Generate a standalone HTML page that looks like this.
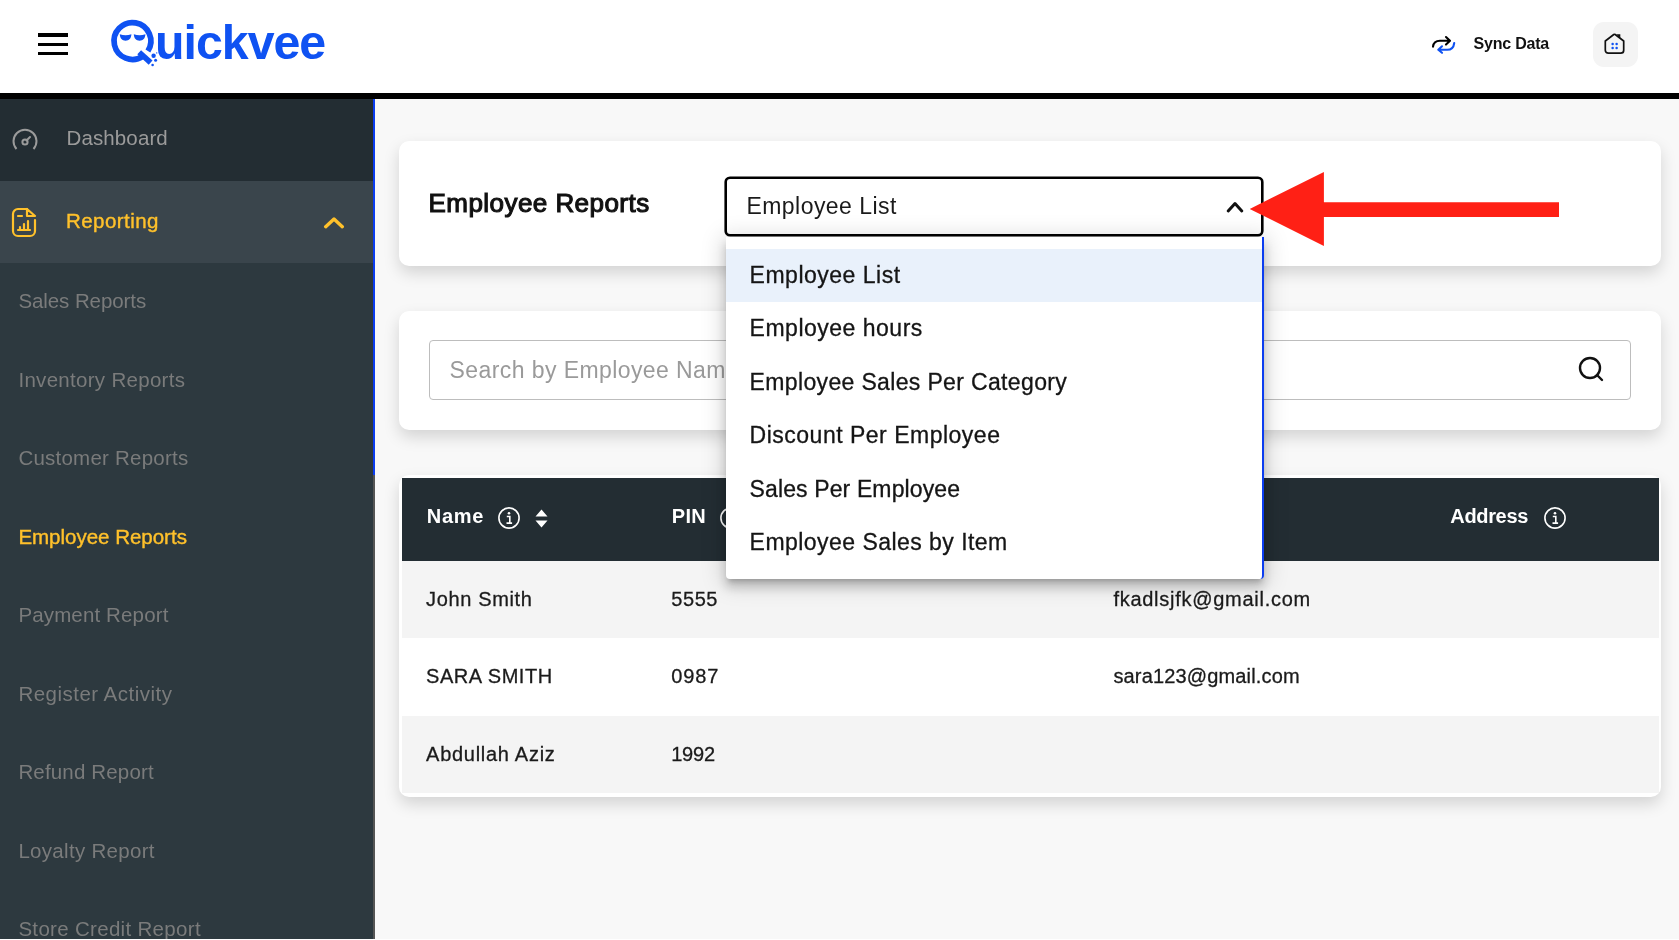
<!DOCTYPE html>
<html lang="en">
<head>
<meta charset="utf-8">
<title>Quickvee - Employee Reports</title>
<style>
*{box-sizing:border-box;margin:0;padding:0}
html,body{width:1679px;height:940px;overflow:hidden}
body{font-family:"Liberation Sans",Arial,sans-serif;background:#f8f8f8;color:#111;position:relative}
#app{position:absolute;left:0;top:0;width:1679px;height:940px;overflow:hidden;background:#f8f8f8;will-change:transform}
/* header */
header{position:absolute;left:0;top:0;width:1679px;height:99px;background:#fff;border-bottom:6px solid #000;z-index:5}
.burger{position:absolute;left:38px;top:33px;width:30px;height:22px}
.burger i{position:absolute;left:0;width:30px;height:3.5px;background:#000}
.logo{position:absolute;left:108px;top:12px;height:64px;width:230px}
.logo .word{position:absolute;left:46.7px;top:-1.7px;font-weight:bold;font-size:49px;line-height:64px;color:#0f52f2;letter-spacing:-1px;white-space:nowrap;transform:scaleX(.985);transform-origin:0 50%}
.sync{position:absolute;left:1473.5px;top:34px;font-size:16px;line-height:20px;font-weight:bold;color:#111;white-space:nowrap;letter-spacing:-.2px}
.syncico{position:absolute;left:1429px;top:32px;width:30px;height:26px}
.storebtn{position:absolute;left:1592.6px;top:22px;width:45px;height:45px;border-radius:11px;background:#f4f4f4}
.storebtn svg{position:absolute;left:10.6px;top:10px}
/* sidebar */
nav{position:absolute;left:0;top:99px;width:373px;height:841px;background:#2d393f;overflow:hidden}
.scroll{position:absolute;left:373px;top:99px;width:2px;height:841px;background:#555}
.scroll b{display:block;width:2px;height:376px;background:#0b3df0}
nav .top{position:relative;height:82px;display:block}
nav .top.dash{background:#232d33;height:81.5px}
nav .top.rep{background:#3a454c;height:82.5px}
nav .top span{position:absolute;left:66px;top:0;line-height:82px;font-size:20.5px;white-space:nowrap}
nav .top.dash span{color:#9b9b9b;line-height:77.5px;letter-spacing:.12px;left:66.5px}
nav .top.rep span{color:#ffc12b;letter-spacing:.45px;line-height:79.5px;-webkit-text-stroke:.4px #ffc12b}
nav .top svg{position:absolute}
nav ul{list-style:none}
nav li{height:78.5px;line-height:75.5px;padding-left:18.4px;font-size:20.5px;color:#7a7b7b;white-space:nowrap}
nav li.on{color:#ffc12b;-webkit-text-stroke:.4px #ffc12b}
/* main */
.card{position:absolute;background:#fff;border-radius:10px;box-shadow:0 7px 16px rgba(0,0,0,.15)}
#c1{left:398.5px;top:141px;width:1262.5px;height:125px}
#c2{left:398.5px;top:310.5px;width:1262.5px;height:119.5px}
#c3{left:398.5px;top:475px;width:1262.5px;height:322px;padding:2.7px 0 0 3.6px}
h1{position:absolute;left:30px;top:45.5px;font-size:26px;line-height:32px;font-weight:normal;-webkit-text-stroke:1.1px #111;color:#111;white-space:nowrap;letter-spacing:.45px}
.select{position:absolute;left:326.5px;top:36px;width:538px;height:59px;border:2px solid #000;box-shadow:0 0 0 .6px #000;border-radius:5px;background:#fff;font-size:23px;line-height:55px;padding-left:19.4px;color:#1a1a1a;white-space:nowrap;letter-spacing:.46px}
.select svg{position:absolute;right:16.5px;top:20.5px}
.search{position:absolute;left:30px;top:29px;width:1202px;height:60px;border:1px solid #bdbdbd;border-radius:4px;font-size:23px;line-height:58px;padding-left:20px;color:#9a9a9a;white-space:nowrap;overflow:hidden;letter-spacing:.42px}
.search svg{position:absolute;right:24.5px;top:14.5px}
table{border-collapse:collapse;width:1256.5px;table-layout:fixed}
th{background:#232d33;color:#fff;height:83px;text-align:left;font-size:20px;font-weight:bold;padding:0 0 6px 24.6px;white-space:nowrap;vertical-align:middle}
th span{display:inline-block;vertical-align:middle}
th svg{display:inline-block;vertical-align:middle;margin-left:13.5px;margin-top:2.5px}
th svg.sort{margin-left:15px;margin-top:4px}
td{height:77.5px;font-size:20px;color:#1b1b1b;padding:0 0 0 24px;white-space:nowrap;-webkit-text-stroke:.3px #1b1b1b}
tbody tr:nth-child(odd) td{background:#f4f4f4}
tbody tr:nth-child(even) td{background:#fff}
/* dropdown */
.menu{position:absolute;left:726px;top:237px;width:538px;height:341.8px;background:#fff;border-radius:0 0 4px 4px;box-shadow:0 5px 5px -3px rgba(0,0,0,.2),0 8px 10px 1px rgba(0,0,0,.14),0 3px 22px 4px rgba(0,0,0,.15);padding-top:12px;z-index:10;border-right:2px solid #0b3df0}
.menu div{height:53.4px;line-height:53.6px;padding-left:23.6px;font-size:23px;color:#151515;white-space:nowrap;-webkit-text-stroke:.3px #151515}
.menu div.sel{background:#e9f1fb}
.arrow{position:absolute;left:1249px;top:170px;z-index:11}
</style>
</head>
<body>
<div id="app">
<header>
  <div class="burger"><i style="top:0"></i><i style="top:9.5px"></i><i style="top:18.7px"></i></div>
  <div class="logo">
    <svg width="64" height="64" viewBox="0 0 64 64" style="position:absolute;left:0;top:0">
      <path d="M35 44.1 A18.4 18.4 0 1 1 39.9 39" fill="none" stroke="#0f52f2" stroke-width="5.7"/>
      <path d="M31.2 40.2 L42.6 50.6" stroke="#0f52f2" stroke-width="5.6"/>
      <path d="M11.8 22.3 Q17.6 24.2 23.4 22.3 C23.2 26.6 21 28.7 17.6 28.7 C14.2 28.7 12 26.6 11.8 22.3 Z M25.8 22.3 Q31.6 24.2 37.4 22.3 C37.2 26.6 35 28.7 31.6 28.7 C28.2 28.7 26 26.6 25.8 22.3 Z" fill="#0f52f2"/>
      <circle cx="45.6" cy="43.8" r="2.2" fill="#0f52f2"/><circle cx="47.6" cy="48.3" r="1.5" fill="#0f52f2"/><circle cx="44.6" cy="53" r="1.3" fill="#0f52f2"/><circle cx="48.7" cy="40.9" r=".7" fill="#0f52f2"/>
    </svg>
    <span class="word">uickvee</span>
  </div>
  <svg class="syncico" viewBox="0 0 30 26"><path d="M4 14.6 C4.5 10.6 7 8.7 11 8.7 H20.4 M17 5 L21 8.7 L17 12.6" fill="none" stroke="#000" stroke-width="2.1" stroke-linecap="round" stroke-linejoin="round"/><path d="M25.2 11.1 C24.7 15.2 22.2 17.8 18.2 17.8 H10 M13 14.3 L9.3 17.8 L13 20.8" fill="none" stroke="#0f52f2" stroke-width="2.1" stroke-linecap="round" stroke-linejoin="round"/></svg>
  <div class="sync">Sync Data</div>
  <div class="storebtn"><svg width="24" height="24" viewBox="0 0 24 24"><path d="M2.3 9 L10.8 2.5 Q11.5 2 12.2 2.5 L20.7 9 V18.2 a3 3 0 0 1 -3 3 H5.3 a3 3 0 0 1 -3 -3 Z" fill="none" stroke="#111" stroke-width="1.7" stroke-linejoin="round"/><path d="M13.5 2.2 H17.3 V6 Z" fill="#111"/><g fill="#0f52f2"><circle cx="9.6" cy="12" r="1.25"/><circle cx="13.6" cy="12" r="1.25"/><circle cx="9.6" cy="16.1" r="1.25"/><circle cx="13.6" cy="16.1" r="1.25"/></g></svg></div>
</header>

<nav>
  <a class="top dash"><svg width="28" height="24" viewBox="0 0 28 24" style="left:10.5px;top:28.5px"><path d="M5.5 21 A11.5 11.5 0 1 1 22.5 21" fill="none" stroke="#9b9b9b" stroke-width="2"/><circle cx="14" cy="14" r="2.6" fill="none" stroke="#9b9b9b" stroke-width="2"/><path d="M15.5 12.5 L19 9" stroke="#9b9b9b" stroke-width="2" stroke-linecap="round"/></svg><span>Dashboard</span></a>
  <a class="top rep"><svg width="28" height="32" viewBox="0 0 28 32" style="left:11.4px;top:26.5px"><path d="M16 2 H7 a5 5 0 0 0 -5 5 V24 a5 5 0 0 0 5 5 H19 a5 5 0 0 0 5 -5 V13" fill="none" stroke="#ffc12b" stroke-width="2.2" stroke-linecap="round"/><path d="M16 2 V9 H24 Z" fill="none" stroke="#ffc12b" stroke-width="2.2" stroke-linejoin="round"/><path d="M7 9 H11 M7 23 H19 M9 23 V20 M13 23 V17 M17 23 V14" stroke="#ffc12b" stroke-width="2.2" stroke-linecap="round"/></svg><span>Reporting</span><svg width="24" height="14" viewBox="0 0 24 14" style="left:322px;top:34px"><path d="M3.7 11.7 L12 4 L20.3 11.7" fill="none" stroke="#ffc12b" stroke-width="3.4" stroke-linecap="round" stroke-linejoin="round"/></svg></a>
  <ul>
    <li style="letter-spacing:-0.08px">Sales Reports</li>
    <li style="letter-spacing:0.30px">Inventory Reports</li>
    <li style="letter-spacing:0.23px">Customer Reports</li>
    <li class="on" style="letter-spacing:-0.01px">Employee Reports</li>
    <li style="letter-spacing:0.14px">Payment Report</li>
    <li style="letter-spacing:0.48px">Register Activity</li>
    <li style="letter-spacing:0.16px">Refund Report</li>
    <li style="letter-spacing:0.30px">Loyalty Report</li>
    <li style="letter-spacing:0.31px">Store Credit Report</li>
  </ul>
</nav>
<div class="scroll"><b></b></div>

<section class="card" id="c1">
  <h1>Employee Reports</h1>
  <div class="select">Employee List<svg width="20" height="14" viewBox="0 0 20 14"><path d="M3.2 11 L10 3.6 L16.8 11" fill="none" stroke="#111" stroke-width="3" stroke-linecap="round" stroke-linejoin="round"/></svg></div>
</section>

<section class="card" id="c2">
  <div class="search">Search by Employee Name<svg width="28" height="28" viewBox="0 0 28 28"><circle cx="13" cy="13" r="10" fill="none" stroke="#111" stroke-width="2.4"/><path d="M20 20 L25 25" stroke="#111" stroke-width="2.4" stroke-linecap="round"/></svg></div>
</section>

<section class="card" id="c3">
  <table>
    <colgroup><col style="width:245.1px"><col style="width:442.2px"><col style="width:336.4px"><col></colgroup>
    <thead><tr>
      <th><span style="letter-spacing:.77px">Name</span><svg width="22" height="22" viewBox="0.5 0.5 22 22"><circle cx="11.5" cy="11.5" r="10.1" fill="none" stroke="#fff" stroke-width="1.6"/><circle cx="11.5" cy="6.8" r="1.3" fill="#fff"/><path d="M9.3 10 H12.3 V16.5 M9 16.6 H14.6" fill="none" stroke="#fff" stroke-width="1.6"/></svg><svg class="sort" width="13" height="19" viewBox="0 0 13 19"><path d="M6.5 0.5 L12.5 7.5 H0.5 Z M6.5 18.5 L12.5 11.5 H0.5 Z" fill="#fff"/></svg></th>
      <th><span style="letter-spacing:.3px">PIN</span><svg width="22" height="22" viewBox="0.5 0.5 22 22"><circle cx="11.5" cy="11.5" r="10.1" fill="none" stroke="#fff" stroke-width="1.6"/><circle cx="11.5" cy="6.8" r="1.3" fill="#fff"/><path d="M9.3 10 H12.3 V16.5 M9 16.6 H14.6" fill="none" stroke="#fff" stroke-width="1.6"/></svg><svg class="sort" width="13" height="19" viewBox="0 0 13 19"><path d="M6.5 0.5 L12.5 7.5 H0.5 Z M6.5 18.5 L12.5 11.5 H0.5 Z" fill="#fff"/></svg></th>
      <th><span>Email</span><svg width="22" height="22" viewBox="0.5 0.5 22 22"><circle cx="11.5" cy="11.5" r="10.1" fill="none" stroke="#fff" stroke-width="1.6"/><circle cx="11.5" cy="6.8" r="1.3" fill="#fff"/><path d="M9.3 10 H12.3 V16.5 M9 16.6 H14.6" fill="none" stroke="#fff" stroke-width="1.6"/></svg></th>
      <th><span style="letter-spacing:-.35px">Address</span><svg style="margin-left:16.5px" width="22" height="22" viewBox="0.5 0.5 22 22"><circle cx="11.5" cy="11.5" r="10.1" fill="none" stroke="#fff" stroke-width="1.6"/><circle cx="11.5" cy="6.8" r="1.3" fill="#fff"/><path d="M9.3 10 H12.3 V16.5 M9 16.6 H14.6" fill="none" stroke="#fff" stroke-width="1.6"/></svg></th>
    </tr></thead>
    <tbody>
      <tr><td style="letter-spacing:.63px">John Smith</td><td style="letter-spacing:.6px">5555</td><td style="letter-spacing:.73px">fkadlsjfk@gmail.com</td><td></td></tr>
      <tr><td style="letter-spacing:.55px">SARA SMITH</td><td style="letter-spacing:.9px">0987</td><td style="letter-spacing:.16px">sara123@gmail.com</td><td></td></tr>
      <tr><td style="letter-spacing:.72px">Abdullah Aziz</td><td style="letter-spacing:-.2px">1992</td><td></td><td></td></tr>
    </tbody>
  </table>
</section>

<div class="menu">
  <div class="sel" style="letter-spacing:0.50px">Employee List</div>
  <div style="letter-spacing:0.50px">Employee hours</div>
  <div style="letter-spacing:0.35px">Employee Sales Per Category</div>
  <div style="letter-spacing:0.50px">Discount Per Employee</div>
  <div style="letter-spacing:0.12px">Sales Per Employee</div>
  <div style="letter-spacing:0.46px">Employee Sales by Item</div>
</div>

<svg class="arrow" width="312" height="78" viewBox="0 0 312 78"><path d="M0.7 38.9 L74.9 1.9 V32.2 H310 V46.9 H74.9 V75.9 Z" fill="#ff2015"/></svg>
<div style="position:absolute;left:0;top:939px;width:1679px;height:1px;background:#fff;z-index:20"></div>
</div>
</body>
</html>
